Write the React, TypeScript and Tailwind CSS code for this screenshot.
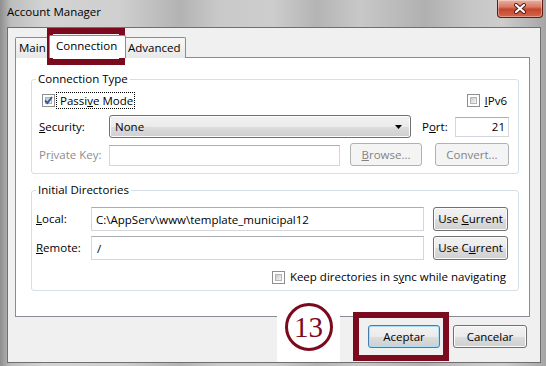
import React from "react";

const btn =
  "flex items-center justify-center rounded-[3px] border border-[#707070] bg-[linear-gradient(#f2f2f2_0%,#ebebeb_50%,#dddddd_51%,#cfcfcf_100%)] shadow-[inset_0_0_0_1px_#fcfcfc]";
const btnDisabled =
  "flex items-center justify-center rounded-[3px] border border-[#adb2b5] bg-[#f4f4f4] text-[#838383]";
const field =
  "border border-[#d3d6dc] border-t-[#abadb3] bg-white outline-none";

const Check = ({ checked }: { checked?: boolean }) => {
  return (
    <span className="relative flex h-[13px] w-[13px] shrink-0 border border-[#8e8f8f] bg-white p-[2px]">
      <span
        className={
          checked
            ? "h-full w-full border border-[#a6b4c6] bg-[linear-gradient(135deg,#b7c7da,#eef3f8)]"
            : "h-full w-full border border-[#b5b5b5] bg-[linear-gradient(135deg,#c9c9c9,#f6f6f6)]"
        }
      ></span>
      {checked && (
        <svg
          className="absolute left-[-1px] top-[-1px]"
          width="13"
          height="13"
          viewBox="0 0 13 13"
        >
          <path
            d="M3 6.3 L5.4 9 L10 3"
            fill="none"
            stroke="#3c5686"
            strokeWidth="1.9"
          />
        </svg>
      )}
    </span>
  );
};

const CloseButton = () => {
  return (
    <div className="mr-[3px] flex h-[18px] w-[46px] items-center justify-center rounded-b-[4px] border border-t-0 border-[#5e1e16] bg-[linear-gradient(#eab0a2_0%,#d97a66_40%,#c5452c_55%,#d4684c_100%)] shadow-[inset_0_0_0_1px_rgba(255,255,255,0.35)]">
      <svg width="14" height="11" viewBox="0 0 14 11">
        <path
          d="M3 2 L11 9 M11 2 L3 9"
          stroke="#4a1a12"
          strokeWidth="4"
          strokeLinecap="round"
        />
        <path
          d="M3 2 L11 9 M11 2 L3 9"
          stroke="#ffffff"
          strokeWidth="2.2"
          strokeLinecap="round"
        />
      </svg>
    </div>
  );
};

export default function App() {
  return (
    <div className="relative h-[366px] w-[546px] overflow-hidden bg-[linear-gradient(90deg,#8e8e8e_0%,#bdbdbd_2%,#d3d3d3_8%,#cfcfcf_22%,#b3b3b3_33%,#c9c9c9_40%,#cdcdcd_50%,#b4b4b4_58%,#c8c8c8_66%,#b0b0b0_78%,#c6c6c6_86%,#cdcdcd_92%,#a6a6a6_100%)] font-['Open_Sans',sans-serif] text-[11.5px] leading-[16px] text-black">
      {/* title bar */}
      <div className="flex h-[27px] items-start justify-between">
        <span className="ml-[7px] mt-[4px]">Account Manager</span>
        <CloseButton />
      </div>

      {/* client area */}
      <div className="ml-[7px] h-[336px] w-[534px] border border-[#6f6f6f] bg-[#f0f0f0]">
        {/* tabs */}
        <div className="ml-[7px] mt-[7px] flex h-[23px] items-end">
          <div className="flex h-[21px] w-[36px] items-center rounded-t-[2px] border border-b-0 border-[#898c95] bg-[linear-gradient(#f7f7f7,#e8e8e8)] pl-[3px]">
            Main
          </div>
          <div className="relative z-10 -mx-[2px] flex h-[23px] w-[77px] items-start rounded-t-[2px] border border-b-0 border-[#898c95] bg-white pl-[6px] pt-[2px]">
            Connection
          </div>
          <div className="flex h-[21px] w-[62px] items-center rounded-t-[2px] border border-b-0 border-[#898c95] bg-[linear-gradient(#f7f7f7,#e8e8e8)] pl-[3px]">
            Advanced
          </div>
        </div>

        {/* tab page */}
        <div className="-mt-px ml-[7px] h-[260px] w-[515px] border border-[#898c95] bg-white">
          <fieldset className="ml-[15px] mt-[13px] w-[488px] rounded-[3px] border border-[#d5dfe5] pb-[7px]">
            <legend className="ml-[4px] px-[2px]">Connection Type</legend>

            <div className="mt-[5px] flex h-[17px] items-center pl-[10px] pr-[11px]">
              <Check checked />
              <span className="ml-[1px] border border-dotted border-black pl-[3px] pr-[1px] leading-[15px]">
                Passi<u>v</u>e Mode
              </span>
              <div className="ml-auto flex items-center">
                <Check />
                <span className="ml-[5px]">
                  <u>I</u>Pv6
                </span>
              </div>
            </div>

            <div className="mt-[6px] flex h-[23px] items-center pl-[7px]">
              <span className="w-[70px]">
                <u>S</u>ecurity:
              </span>
              <div
                className={`${btn} h-[23px] w-[302px] !justify-between pl-[5px] pr-[8px]`}
              >
                <span>None</span>
                <svg width="7" height="4" viewBox="0 0 7 4">
                  <polygon points="0,0 7,0 3.5,4" fill="#000" />
                </svg>
              </div>
              <span className="ml-[11px] w-[33px]">
                P<u>o</u>rt:
              </span>
              <input
                readOnly
                defaultValue="21"
                className={`${field} h-[20px] w-[54px] pr-[3px] text-right`}
              />
            </div>

            <div className="mt-[5px] flex h-[23px] items-center pl-[7px]">
              <span className="w-[70px] text-[#8d8d8d]">
                Pr<u>i</u>vate Key:
              </span>
              <input
                readOnly
                defaultValue=""
                className={`${field} h-[21px] w-[231px] self-end`}
              />
              <button
                type="button"
                className={`${btnDisabled} ml-[10px] h-[23px] w-[72px]`}
              >
                <span>
                  <u>B</u>rowse...
                </span>
              </button>
              <button
                type="button"
                className={`${btnDisabled} ml-[13px] h-[23px] w-[74px]`}
              >
                Convert...
              </button>
            </div>
          </fieldset>

          <fieldset className="ml-[15px] mt-[8px] w-[488px] rounded-[3px] border border-[#d5dfe5] pb-[5px]">
            <legend className="ml-[4px] px-[2px]">Initial Directories</legend>

            <div className="mt-[9px] flex h-[24px] items-center pl-[4px]">
              <span className="w-[55px]">
                <u>L</u>ocal:
              </span>
              <input
                readOnly
                defaultValue="C:\AppServ\www\template_municipal12"
                className={`${field} h-[24px] w-[333px] pl-[4px]`}
              />
              <button type="button" className={`${btn} ml-[9px] h-[24px] w-[75px]`}>
                <span>
                  Use <u>C</u>urrent
                </span>
              </button>
            </div>

            <div className="mt-[5px] flex h-[24px] items-center pl-[4px]">
              <span className="w-[55px]">
                <u>R</u>emote:
              </span>
              <input
                readOnly
                defaultValue="/"
                className={`${field} h-[24px] w-[333px] pl-[5px]`}
              />
              <button type="button" className={`${btn} ml-[9px] h-[24px] w-[75px]`}>
                <span>
                  Use C<u>u</u>rrent
                </span>
              </button>
            </div>

            <div className="mt-[9px] flex h-[16px] items-center justify-end pr-[12px]">
              <Check />
              <span className="ml-[5px]">
                Keep directories in s<u>y</u>nc while navigating
              </span>
            </div>
          </fieldset>
        </div>

        {/* dialog buttons */}
        <div className="mt-[8px] flex justify-end gap-[13px] pr-[13px]">
          <button
            type="button"
            className={`${btn} h-[23px] w-[72px] !border-[#3c7fb1] !shadow-[inset_0_0_0_1px_#a9def6]`}
          >
            Aceptar
          </button>
          <button type="button" className={`${btn} h-[23px] w-[74px]`}>
            Cancelar
          </button>
        </div>
      </div>

      {/* annotations */}
      <div className="absolute left-[47px] top-[28px] h-[37px] w-[78px] border-[6px] border-[#7b0a1f]"></div>
      <div className="absolute left-[277px] top-[301px] flex h-[61px] w-[63px] justify-center bg-white pt-[2px]">
        <div className="flex h-[48px] w-[48px] items-center justify-center rounded-full border-[3px] border-[#7b0a1f] font-['Liberation_Serif',serif] text-[29px] leading-none text-[#7b0a1f]">
          13
        </div>
      </div>
      <div className="absolute left-[353px] top-[312px] h-[49px] w-[96px] border-[6px] border-[#7b0a1f]"></div>
    </div>
  );
}
